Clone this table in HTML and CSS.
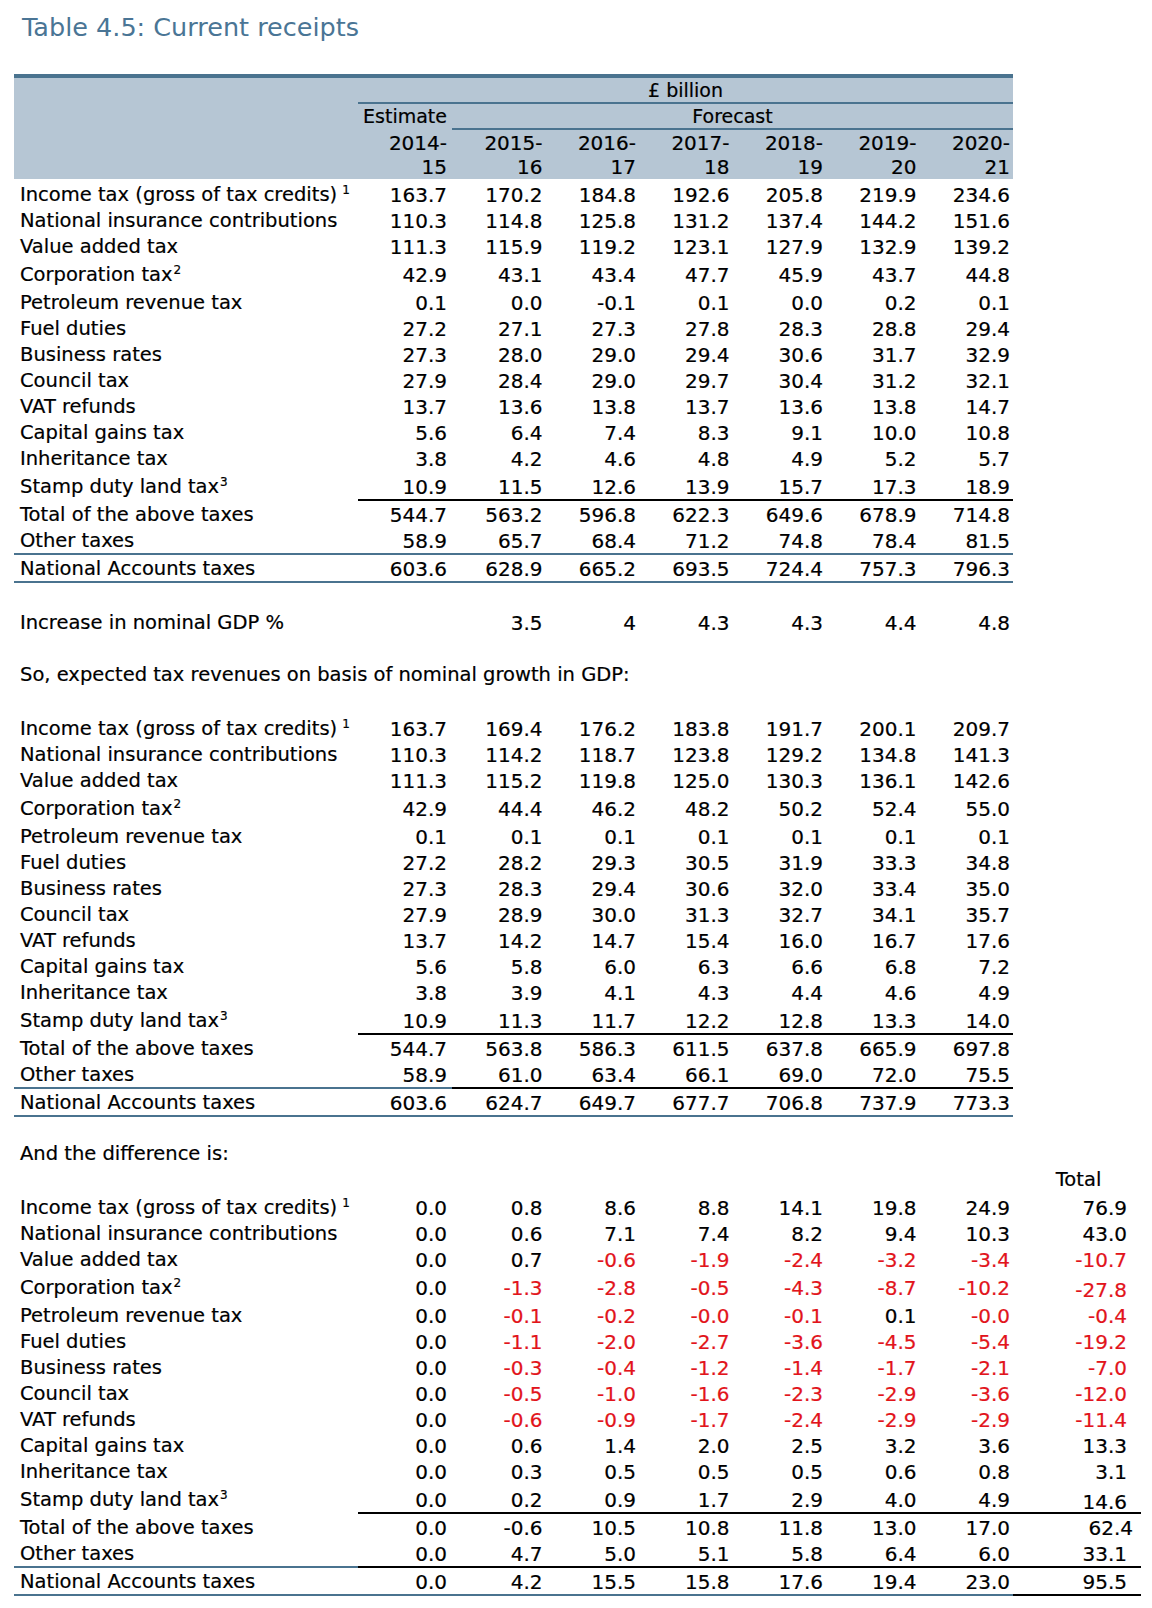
FILE: index.html
```html
<!DOCTYPE html>
<html lang="en">
<head>
<meta charset="utf-8">
<title>Table 4.5: Current receipts</title>
<link rel="stylesheet" href="styles.css">
</head>
<body>
<div class="page">
<h1 class="title">Table 4.5: Current receipts</h1>
<table class="receipts">
<colgroup><col class="c-lbl"><col class="c-est"><col class="c-yr"><col class="c-yr"><col class="c-yr"><col class="c-yr"><col class="c-yr"><col class="c-yr"><col class="c-tot"></colgroup>
<thead>
<tr class="h1"><td class="hd"></td><td class="hd ctr word" colspan="7">£ billion</td><td class="tc"></td></tr>
<tr class="h2"><td class="hd"></td><td class="hd bl est word">Estimate</td><td class="hd bl ctr word" colspan="6">Forecast</td><td class="tc"></td></tr>
<tr class="h3"><td class="hd"></td><td class="hd est">2014-</td><td class="hd bl">2015-</td><td class="hd bl">2016-</td><td class="hd bl">2017-</td><td class="hd bl">2018-</td><td class="hd bl">2019-</td><td class="hd bl">2020-</td><td class="tc"></td></tr>
<tr class="h4"><td class="hd"></td><td class="hd est">15</td><td class="hd">16</td><td class="hd">17</td><td class="hd">18</td><td class="hd">19</td><td class="hd">20</td><td class="hd">21</td><td class="tc"></td></tr>
</thead>
<tbody class="sec">
<tr class="t"><td class="lbl">Income tax (gross of tax credits)<sup class="fn wide">1</sup></td><td>163.7</td><td>170.2</td><td>184.8</td><td>192.6</td><td>205.8</td><td>219.9</td><td>234.6</td><td></td></tr>
<tr><td class="lbl">National insurance contributions</td><td>110.3</td><td>114.8</td><td>125.8</td><td>131.2</td><td>137.4</td><td>144.2</td><td>151.6</td><td></td></tr>
<tr><td class="lbl">Value added tax</td><td>111.3</td><td>115.9</td><td>119.2</td><td>123.1</td><td>127.9</td><td>132.9</td><td>139.2</td><td></td></tr>
<tr class="t"><td class="lbl">Corporation tax<sup class="fn">2</sup></td><td>42.9</td><td>43.1</td><td>43.4</td><td>47.7</td><td>45.9</td><td>43.7</td><td>44.8</td><td></td></tr>
<tr class="t"><td class="lbl">Petroleum revenue tax</td><td>0.1</td><td>0.0</td><td>-0.1</td><td>0.1</td><td>0.0</td><td>0.2</td><td>0.1</td><td></td></tr>
<tr><td class="lbl">Fuel duties</td><td>27.2</td><td>27.1</td><td>27.3</td><td>27.8</td><td>28.3</td><td>28.8</td><td>29.4</td><td></td></tr>
<tr><td class="lbl">Business rates</td><td>27.3</td><td>28.0</td><td>29.0</td><td>29.4</td><td>30.6</td><td>31.7</td><td>32.9</td><td></td></tr>
<tr><td class="lbl">Council tax</td><td>27.9</td><td>28.4</td><td>29.0</td><td>29.7</td><td>30.4</td><td>31.2</td><td>32.1</td><td></td></tr>
<tr><td class="lbl">VAT refunds</td><td>13.7</td><td>13.6</td><td>13.8</td><td>13.7</td><td>13.6</td><td>13.8</td><td>14.7</td><td></td></tr>
<tr><td class="lbl">Capital gains tax</td><td>5.6</td><td>6.4</td><td>7.4</td><td>8.3</td><td>9.1</td><td>10.0</td><td>10.8</td><td></td></tr>
<tr><td class="lbl">Inheritance tax</td><td>3.8</td><td>4.2</td><td>4.6</td><td>4.8</td><td>4.9</td><td>5.2</td><td>5.7</td><td></td></tr>
<tr class="t"><td class="lbl">Stamp duty land tax<sup class="fn">3</sup></td><td>10.9</td><td>11.5</td><td>12.6</td><td>13.9</td><td>15.7</td><td>17.3</td><td>18.9</td><td></td></tr>
<tr class="lt"><td class="lbl">Total of the above taxes</td><td class="k">544.7</td><td class="k">563.2</td><td class="k">596.8</td><td class="k">622.3</td><td class="k">649.6</td><td class="k">678.9</td><td class="k">714.8</td><td></td></tr>
<tr><td class="lbl">Other taxes</td><td>58.9</td><td>65.7</td><td>68.4</td><td>71.2</td><td>74.8</td><td>78.4</td><td>81.5</td><td></td></tr>
<tr class="na"><td class="lbl b bb">National Accounts taxes</td><td class="b bb">603.6</td><td class="b bb">628.9</td><td class="b bb">665.2</td><td class="b bb">693.5</td><td class="b bb">724.4</td><td class="b bb">757.3</td><td class="b bb">796.3</td><td></td></tr>
</tbody>
<tbody class="txt">
<tr><td colspan="9"></td></tr>
<tr><td class="lbl">Increase in nominal GDP %</td><td></td><td>3.5</td><td>4</td><td>4.3</td><td>4.3</td><td>4.4</td><td>4.8</td><td></td></tr>
<tr><td colspan="9"></td></tr>
<tr><td class="lbl" colspan="9">So, expected tax revenues on basis of nominal growth in GDP:</td></tr>
<tr><td colspan="9"></td></tr>
</tbody>
<tbody class="sec">
<tr class="t"><td class="lbl">Income tax (gross of tax credits)<sup class="fn wide">1</sup></td><td>163.7</td><td>169.4</td><td>176.2</td><td>183.8</td><td>191.7</td><td>200.1</td><td>209.7</td><td></td></tr>
<tr><td class="lbl">National insurance contributions</td><td>110.3</td><td>114.2</td><td>118.7</td><td>123.8</td><td>129.2</td><td>134.8</td><td>141.3</td><td></td></tr>
<tr><td class="lbl">Value added tax</td><td>111.3</td><td>115.2</td><td>119.8</td><td>125.0</td><td>130.3</td><td>136.1</td><td>142.6</td><td></td></tr>
<tr class="t"><td class="lbl">Corporation tax<sup class="fn">2</sup></td><td>42.9</td><td>44.4</td><td>46.2</td><td>48.2</td><td>50.2</td><td>52.4</td><td>55.0</td><td></td></tr>
<tr class="t"><td class="lbl">Petroleum revenue tax</td><td>0.1</td><td>0.1</td><td>0.1</td><td>0.1</td><td>0.1</td><td>0.1</td><td>0.1</td><td></td></tr>
<tr><td class="lbl">Fuel duties</td><td>27.2</td><td>28.2</td><td>29.3</td><td>30.5</td><td>31.9</td><td>33.3</td><td>34.8</td><td></td></tr>
<tr><td class="lbl">Business rates</td><td>27.3</td><td>28.3</td><td>29.4</td><td>30.6</td><td>32.0</td><td>33.4</td><td>35.0</td><td></td></tr>
<tr><td class="lbl">Council tax</td><td>27.9</td><td>28.9</td><td>30.0</td><td>31.3</td><td>32.7</td><td>34.1</td><td>35.7</td><td></td></tr>
<tr><td class="lbl">VAT refunds</td><td>13.7</td><td>14.2</td><td>14.7</td><td>15.4</td><td>16.0</td><td>16.7</td><td>17.6</td><td></td></tr>
<tr><td class="lbl">Capital gains tax</td><td>5.6</td><td>5.8</td><td>6.0</td><td>6.3</td><td>6.6</td><td>6.8</td><td>7.2</td><td></td></tr>
<tr><td class="lbl">Inheritance tax</td><td>3.8</td><td>3.9</td><td>4.1</td><td>4.3</td><td>4.4</td><td>4.6</td><td>4.9</td><td></td></tr>
<tr class="t"><td class="lbl">Stamp duty land tax<sup class="fn">3</sup></td><td>10.9</td><td>11.3</td><td>11.7</td><td>12.2</td><td>12.8</td><td>13.3</td><td>14.0</td><td></td></tr>
<tr class="lt"><td class="lbl">Total of the above taxes</td><td class="k">544.7</td><td class="k">563.8</td><td class="k">586.3</td><td class="k">611.5</td><td class="k">637.8</td><td class="k">665.9</td><td class="k">697.8</td><td></td></tr>
<tr><td class="lbl">Other taxes</td><td>58.9</td><td>61.0</td><td>63.4</td><td>66.1</td><td>69.0</td><td>72.0</td><td>75.5</td><td></td></tr>
<tr class="na"><td class="lbl b bb">National Accounts taxes</td><td class="b bb">603.6</td><td class="k bb">624.7</td><td class="k bb">649.7</td><td class="k bb">677.7</td><td class="k bb">706.8</td><td class="k bb">737.9</td><td class="k bb">773.3</td><td></td></tr>
</tbody>
<tbody class="txt">
<tr class="short"><td colspan="9"></td></tr>
<tr><td class="lbl" colspan="9">And the difference is:</td></tr>
<tr><td colspan="8"></td><td class="tot-h">Total</td></tr>
</tbody>
<tbody class="sec">
<tr class="t"><td class="lbl">Income tax (gross of tax credits)<sup class="fn wide">1</sup></td><td>0.0</td><td>0.8</td><td>8.6</td><td>8.8</td><td>14.1</td><td>19.8</td><td>24.9</td><td>76.9</td></tr>
<tr><td class="lbl">National insurance contributions</td><td>0.0</td><td>0.6</td><td>7.1</td><td>7.4</td><td>8.2</td><td>9.4</td><td>10.3</td><td>43.0</td></tr>
<tr><td class="lbl">Value added tax</td><td>0.0</td><td>0.7</td><td class="n">-0.6</td><td class="n">-1.9</td><td class="n">-2.4</td><td class="n">-3.2</td><td class="n">-3.4</td><td class="n">-10.7</td></tr>
<tr class="t"><td class="lbl">Corporation tax<sup class="fn">2</sup></td><td>0.0</td><td class="n">-1.3</td><td class="n">-2.8</td><td class="n">-0.5</td><td class="n">-4.3</td><td class="n">-8.7</td><td class="n">-10.2</td><td class="n lo">-27.8</td></tr>
<tr class="t"><td class="lbl">Petroleum revenue tax</td><td>0.0</td><td class="n">-0.1</td><td class="n">-0.2</td><td class="n">-0.0</td><td class="n">-0.1</td><td>0.1</td><td class="n">-0.0</td><td class="n">-0.4</td></tr>
<tr><td class="lbl">Fuel duties</td><td>0.0</td><td class="n">-1.1</td><td class="n">-2.0</td><td class="n">-2.7</td><td class="n">-3.6</td><td class="n">-4.5</td><td class="n">-5.4</td><td class="n">-19.2</td></tr>
<tr><td class="lbl">Business rates</td><td>0.0</td><td class="n">-0.3</td><td class="n">-0.4</td><td class="n">-1.2</td><td class="n">-1.4</td><td class="n">-1.7</td><td class="n">-2.1</td><td class="n">-7.0</td></tr>
<tr><td class="lbl">Council tax</td><td>0.0</td><td class="n">-0.5</td><td class="n">-1.0</td><td class="n">-1.6</td><td class="n">-2.3</td><td class="n">-2.9</td><td class="n">-3.6</td><td class="n">-12.0</td></tr>
<tr><td class="lbl">VAT refunds</td><td>0.0</td><td class="n">-0.6</td><td class="n">-0.9</td><td class="n">-1.7</td><td class="n">-2.4</td><td class="n">-2.9</td><td class="n">-2.9</td><td class="n">-11.4</td></tr>
<tr><td class="lbl">Capital gains tax</td><td>0.0</td><td>0.6</td><td>1.4</td><td>2.0</td><td>2.5</td><td>3.2</td><td>3.6</td><td>13.3</td></tr>
<tr><td class="lbl">Inheritance tax</td><td>0.0</td><td>0.3</td><td>0.5</td><td>0.5</td><td>0.5</td><td>0.6</td><td>0.8</td><td>3.1</td></tr>
<tr class="t"><td class="lbl">Stamp duty land tax<sup class="fn">3</sup></td><td>0.0</td><td>0.2</td><td>0.9</td><td>1.7</td><td>2.9</td><td>4.0</td><td>4.9</td><td class="lo">14.6</td></tr>
<tr class="lt"><td class="lbl">Total of the above taxes</td><td class="k">0.0</td><td class="k">-0.6</td><td class="k">10.5</td><td class="k">10.8</td><td class="k">11.8</td><td class="k">13.0</td><td class="k">17.0</td><td class="k shift">62.4</td></tr>
<tr><td class="lbl">Other taxes</td><td>0.0</td><td>4.7</td><td>5.0</td><td>5.1</td><td>5.8</td><td>6.4</td><td>6.0</td><td>33.1</td></tr>
<tr class="na"><td class="lbl b bb">National Accounts taxes</td><td class="k bb">0.0</td><td class="k bb">4.2</td><td class="k bb">15.5</td><td class="k bb">15.8</td><td class="k bb">17.6</td><td class="k bb">19.4</td><td class="k bb">23.0</td><td class="k kb">95.5</td></tr>
</tbody>
</table>
</div>
</body>
</html>
```
FILE: styles.css
```css
html, body {
  margin: 0;
  padding: 0;
  background: #ffffff;
}

body {
  font-family: "DejaVu Sans", "Liberation Sans", sans-serif;
  color: #000000;
}

.page {
  padding: 12px 0 0 14px;
}

.title {
  margin: 0 0 32px 8px;
  font-size: 25.5px;
  line-height: 30px;
  font-weight: normal;
  color: #4a7595;
}

.receipts {
  border-collapse: separate;
  border-spacing: 0;
  table-layout: fixed;
  width: 1127px;
  font-size: 20px;
  -webkit-text-stroke: 0.2px currentColor;
}

.c-lbl { width: 344px; }
.c-est { width: 94px; }
.c-yr { width: 93.5px; }
.c-tot { width: 128px; }

.receipts td {
  padding: 0 3px 2px 3px;
  line-height: 20px;
  vertical-align: bottom;
  text-align: right;
  white-space: nowrap;
}

.receipts tr { height: 26px; }

.receipts td.lbl {
  text-align: left;
  padding-left: 6px;
  font-size: 19.5px;
}

/* header */
.receipts td.hd { background: #b6c6d4; }
.receipts td.ctr { text-align: center; }
.receipts td.est { padding-right: 5px; }
.receipts td.word { font-size: 19px; }

.receipts tr.h1 { height: 28px; }
.receipts tr.h1 td.hd { border-top: 4px solid #4a738f; }
.receipts tr.h2 { height: 26px; }
.receipts tr.h2 td { border-top: 2px solid transparent; }
.receipts tr.h2 td.bl { border-top-color: #4a738f; }
.receipts tr.h3 { height: 27px; }
.receipts tr.h3 td { border-top: 2px solid transparent; }
.receipts tr.h3 td.bl { border-top-color: #4a738f; }
.receipts tr.h4 { height: 24px; }

/* data */
.sec td:nth-child(2) { padding-right: 5px; }
.sec td:nth-child(9) { padding-right: 14px; }
.sec td.shift { padding-right: 8px; }
.sec td.lo { padding-bottom: 0; }

.receipts tr.t { height: 28px; }
.receipts tr.lt { height: 28px; }
.receipts tr.na { height: 30px; }
.receipts tr.short { height: 23px; }

.receipts tr.lt td,
.receipts tr.na td { border-top: 2px solid transparent; }
.receipts tr.na td { border-bottom: 2px solid transparent; }

.receipts tr.lt td.k,
.receipts tr.na td.k { border-top-color: #000000; }
.receipts tr.na td.b { border-top-color: #4a738f; }
.receipts tr.na td.bb { border-bottom-color: #4a738f; }
.receipts tr.na td.kb { border-bottom-color: #000000; }

.receipts td.n { color: #e2141b; }

.receipts td.tot-h {
  text-align: center;
  padding-right: 0;
  font-size: 19.5px;
}

.fn {
  font-size: 12px;
  line-height: 0;
  vertical-align: 7px;
  margin-left: 1px;
}

.fn.wide { margin-left: 5px; }
```
